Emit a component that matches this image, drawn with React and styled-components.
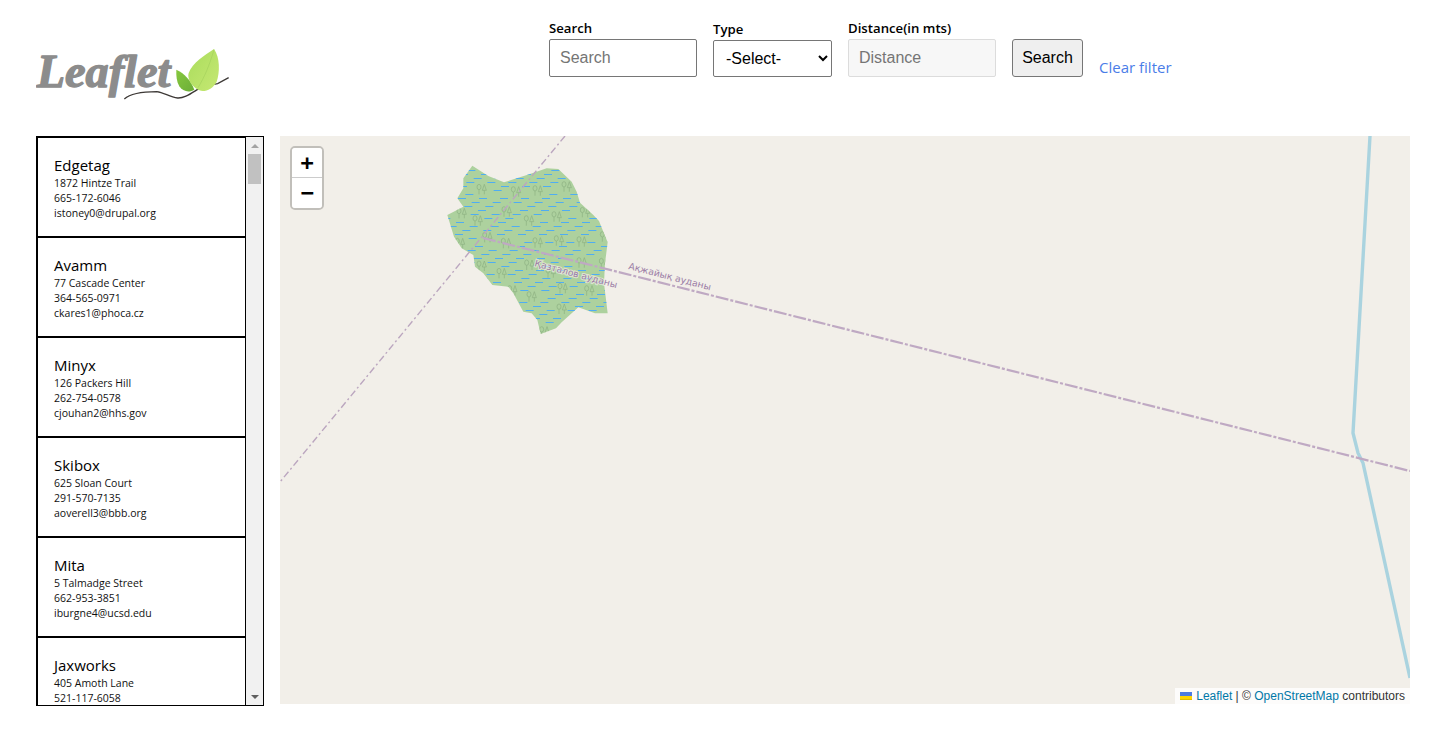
import React from "react";
import styled, { createGlobalStyle } from "styled-components";

const GlobalStyle = createGlobalStyle`
  body {
    margin: 0;
    background: #fff;
    font-family: "Open Sans", "Noto Sans", sans-serif;
    color: #000;
  }
`;

const Page = styled.div`
  width: 1441px;
  height: 730px;
  overflow: hidden;
`;

const Header = styled.header`
  height: 136px;
  box-sizing: border-box;
  padding-left: 36px;
  display: flex;
  align-items: flex-start;
`;

const LogoBox = styled.div`
  width: 513px;
  padding-top: 44px;
  flex-shrink: 0;

  svg {
    display: block;
  }
`;

const FilterForm = styled.form`
  display: flex;
  align-items: flex-end;
  gap: 16px;
  height: 77px;
`;

const Field = styled.label`
  display: flex;
  flex-direction: column;
  font-size: 13.2px;
  line-height: 18px;
  font-weight: 600;
  gap: 2px;
`;

const TextInput = styled.input`
  width: 148px;
  height: 38px;
  box-sizing: border-box;
  padding: 0 10px;
  border: 1px solid ${(p) => (p.disabled ? "#dcdcdc" : "#767676")};
  border-radius: 2px;
  background: ${(p) => (p.disabled ? "#f7f7f7" : "#fff")};
  font-family: "Liberation Sans", Arial, sans-serif;
  font-size: 16px;
  outline: none;

  &::placeholder {
    color: #757575;
    opacity: 1;
  }
`;

const TypeSelect = styled.select`
  width: 119px;
  height: 37px;
  box-sizing: border-box;
  padding: 0 8px;
  border: 1px solid #767676;
  border-radius: 2px;
  background: #fff;
  color: #000;
  font-family: "Liberation Sans", Arial, sans-serif;
  font-size: 16px;
`;

const SearchButton = styled.button`
  width: 71px;
  height: 38px;
  padding: 0;
  border: 1px solid #767676;
  border-radius: 3px;
  background: #efefef;
  color: #000;
  font-family: "Liberation Sans", Arial, sans-serif;
  font-size: 16px;
`;

const ClearLink = styled.a`
  font-size: 15px;
  line-height: 20px;
  color: #4a7de8;
  text-decoration: none;
`;

const Main = styled.main`
  display: flex;
  align-items: flex-start;
  gap: 16px;
  padding-left: 36px;
`;

const ListFrame = styled.div`
  width: 228px;
  height: 570px;
  box-sizing: border-box;
  border: 1px solid #000;
  display: flex;
`;

const CardList = styled.div`
  flex: 1;
  min-width: 0;
  overflow: hidden;
`;

// headless chrome hides real scrollbars, so the rail is drawn by hand
const ScrollRail = styled.div`
  width: 17px;
  flex-shrink: 0;
  background: #f1f1f1;
  display: flex;
  flex-direction: column;
  align-items: center;
`;

const RailArrow = styled.div`
  height: 17px;
  width: 100%;
  display: flex;
  align-items: center;
  justify-content: center;

  &::before {
    content: "";
    border-left: 4px solid transparent;
    border-right: 4px solid transparent;
    ${(p) => (p.$down ? "border-top: 4px solid #5f5f5f;" : "border-bottom: 4px solid #a3a3a3;")}
  }
`;

const RailThumb = styled.div`
  width: 13px;
  height: 30px;
  background: #c1c1c1;
`;

const RailGap = styled.div`
  flex: 1;
`;

const Card = styled.article`
  height: 100px;
  box-sizing: border-box;
  border: 1px solid #000;
  padding: 17px 16px 0;
  font-size: 10.5px;
  line-height: 15px;
  color: #111;
`;

const CardName = styled.h3`
  margin: 0;
  font-size: 15px;
  font-weight: 400;
  line-height: 21px;
  color: #000;
`;

const CardLine = styled.div`
  white-space: nowrap;
`;

const MapPanel = styled.section`
  position: relative;
  width: 1130px;
  height: 568px;
  background: #f2efe9;
  overflow: hidden;
`;

const MapCanvas = styled.svg`
  display: block;
`;

const ZoomBox = styled.div`
  position: absolute;
  top: 10px;
  left: 10px;
  border: 2px solid rgba(0, 0, 0, 0.2);
  border-radius: 5px;
  background-clip: padding-box;
  display: flex;
  flex-direction: column;
`;

const ZoomButton = styled.a`
  width: 30px;
  height: 30px;
  box-sizing: border-box;
  background: #fff;
  color: #000;
  font: bold 22px/30px "DejaVu Sans Mono", "Liberation Mono", monospace;
  text-align: center;
  border-bottom: ${(p) => (p.$first ? "1px solid #ccc" : "none")};
  border-radius: ${(p) => (p.$first ? "3px 3px 0 0" : "0 0 3px 3px")};
`;

const Attribution = styled.div`
  position: absolute;
  right: 0;
  bottom: 0;
  display: flex;
  align-items: center;
  height: 16px;
  padding: 0 5px;
  background: rgba(255, 255, 255, 0.8);
  color: #333;
  font: 12px/16px "Liberation Sans", Arial, sans-serif;
  white-space: pre;

  a {
    color: #0078a8;
    text-decoration: none;
  }
  svg {
    margin-right: 4px;
  }
`;

const vendors = [
  { name: "Edgetag", lines: ["1872 Hintze Trail", "665-172-6046", "istoney0@drupal.org"] },
  { name: "Avamm", lines: ["77 Cascade Center", "364-565-0971", "ckares1@phoca.cz"] },
  { name: "Minyx", lines: ["126 Packers Hill", "262-754-0578", "cjouhan2@hhs.gov"] },
  { name: "Skibox", lines: ["625 Sloan Court", "291-570-7135", "aoverell3@bbb.org"] },
  { name: "Mita", lines: ["5 Talmadge Street", "662-953-3851", "iburgne4@ucsd.edu"] },
  { name: "Jaxworks", lines: ["405 Amoth Lane", "521-117-6058"] },
];

const LeafletLogo = () => (
  <svg width="196" height="65" viewBox="0 -15 588 195">
    <defs>
      <linearGradient id="bigLeaf" x1="0" y1="0" x2="1" y2="1">
        <stop offset="0" stopColor="#a9dc5c" />
        <stop offset="1" stopColor="#c6e873" />
      </linearGradient>
      <linearGradient id="smallLeaf" x1="0" y1="0" x2="1" y2="1">
        <stop offset="0" stopColor="#86c83e" />
        <stop offset="1" stopColor="#6cae38" />
      </linearGradient>
    </defs>
    <text
      x="2"
      y="114"
      fontFamily="'Liberation Serif', serif"
      fontStyle="italic"
      fontWeight="700"
      fontSize="139"
      fill="#8c8c8c"
      stroke="#8c8c8c"
      strokeWidth="4"
      strokeLinejoin="round"
    >
      Leaflet
    </text>
    <path
      d="M265 150 C285 132 325 128 362 128 C385 130 400 145 425 147 C445 148 462 135 490 118 L520 108 L545 104 L578 86"
      fill="none"
      stroke="#3d3936"
      strokeWidth="4"
    />
    <path d="M421 62 C445 72 465 95 475 122 C460 132 440 128 430 112 C422 98 420 80 421 62Z" fill="url(#smallLeaf)" />
    <path d="M534 0 C552 25 552 70 542 98 C530 122 505 130 490 124 C470 116 452 90 458 72 C470 40 505 20 534 0Z" fill="url(#bigLeaf)" />
    <path d="M534 2 C520 50 505 85 486 116" fill="none" stroke="#9ccb58" strokeWidth="1.5" />
  </svg>
);

const wetlandShape =
  "127,47 175,78 222,97 300,72 350,55 385,57 425,95 440,125 450,158 490,195 507,213 520,245 533,277 525,340 522,400 527,440 533,490 495,490 445,472 395,517 378,535 332,552 322,510 305,490 280,485 250,430 235,410 187,405 160,370 135,350 130,315 95,295 72,260 52,195 100,170 82,145 100,115 100,85";

const treeSpots = [
  [155, 118], [258, 125], [323, 122], [410, 110], [95, 190], [143, 212], [230, 185], [297, 212],
  [380, 200], [465, 187], [172, 262], [228, 280], [323, 278], [387, 272], [455, 275], [155, 348],
  [215, 370], [298, 345], [362, 368], [455, 338], [247, 422], [305, 440], [398, 415], [478, 422],
  [395, 477], [343, 545], [90, 280], [522, 340], [525, 260],
];

const nearTree = (x, y) =>
  treeSpots.some(([tx, ty]) => x + 24 > tx - 16 && x < tx + 16 && Math.abs(y - ty) < 17);

// water dashes of the marsh, staggered rows that leave the trees free
const marshDashes = Array.from({ length: 44 }, (_, r) =>
  Array.from({ length: 9 }, (_, c) => ({
    x: 30 + c * 63 + ((r * 41) % 63),
    y: 12 * r + 37.5,
  }))
)
  .flat()
  .filter((d) => !nearTree(d.x, d.y));

const MapDrawing = () => (
  <MapCanvas width="1130" height="568" viewBox="0 0 1130 568">
    <defs>
      <clipPath id="wetlandClip">
        <polygon points={wetlandShape} />
      </clipPath>
    </defs>

    <polyline
      points="1090,0 1073,297 1078,317 1083,327 1130,542"
      fill="none"
      stroke="#aad3df"
      strokeWidth="3.4"
    />

    <g transform={`translate(150 14) scale(${1 / 3})`}>
      <polygon points={wetlandShape} fill="#add19e" />
      <g clipPath="url(#wetlandClip)">
        <g stroke="#4fadf2" strokeWidth="3">
          {marshDashes.map((d) => (
            <line key={`${d.x}-${d.y}`} x1={d.x} x2={d.x + 24} y1={d.y} y2={d.y} />
          ))}
        </g>
        <g fill="none" stroke="#8fb283" strokeWidth="2.2">
          {treeSpots.map(([x, y]) => (
            <g key={`${x}-${y}`} transform={`translate(${x} ${y})`}>
              <ellipse cx="-8" cy="-7" rx="6" ry="8" />
              <line x1="-8" y1="1" x2="-8" y2="15" />
              <path d="M8 -15 L14 3 L2 3Z" />
              <line x1="8" y1="3" x2="8" y2="15" />
            </g>
          ))}
        </g>
      </g>
    </g>

    <line x1="285" y1="0" x2="0" y2="346" stroke="#bba6bf" strokeWidth="1.4" strokeDasharray="7 3 2 3" />
    <line x1="203" y1="102" x2="1130" y2="335" stroke="#bfa9c3" strokeWidth="2.2" strokeDasharray="13 2 3 2" />

    <g
      fontFamily="'DejaVu Sans', sans-serif"
      fontSize="9.3"
      fill="#9c7ea6"
      stroke="#f2efe9"
      strokeWidth="2"
      paintOrder="stroke"
      strokeOpacity="0.7"
    >
      <text transform="translate(254 130) rotate(15)">Қазталов ауданы</text>
      <text transform="translate(348 133) rotate(14.5)">Ақжайық ауданы</text>
    </g>
  </MapCanvas>
);

export default function App() {
  return (
    <Page>
      <GlobalStyle />
      <Header>
        <LogoBox>
          <LeafletLogo />
        </LogoBox>
        <FilterForm onSubmit={(e) => e.preventDefault()}>
          <Field>
            Search
            <TextInput placeholder="Search" />
          </Field>
          <Field>
            Type
            <TypeSelect defaultValue="">
              <option value="">-Select-</option>
            </TypeSelect>
          </Field>
          <Field>
            Distance(in mts)
            <TextInput placeholder="Distance" disabled />
          </Field>
          <SearchButton type="submit">Search</SearchButton>
          <ClearLink href="#">Clear filter</ClearLink>
        </FilterForm>
      </Header>
      <Main>
        <ListFrame>
          <CardList>
            {vendors.map((v) => (
              <Card key={v.name}>
                <CardName>{v.name}</CardName>
                {v.lines.map((line) => (
                  <CardLine key={line}>{line}</CardLine>
                ))}
              </Card>
            ))}
          </CardList>
          <ScrollRail>
            <RailArrow />
            <RailThumb />
            <RailGap />
            <RailArrow $down />
          </ScrollRail>
        </ListFrame>
        <MapPanel>
          <MapDrawing />
          <ZoomBox>
            <ZoomButton $first>+</ZoomButton>
            <ZoomButton>−</ZoomButton>
          </ZoomBox>
          <Attribution>
            <svg width="12" height="8" viewBox="0 0 12 8">
              <path fill="#4c7be1" d="M0 0h12v4H0z" />
              <path fill="#ffd500" d="M0 4h12v3H0z" />
              <path fill="#e0bc00" d="M0 7h12v1H0z" />
            </svg>
            <a href="#">Leaflet</a> | © <a href="#">OpenStreetMap</a> contributors
          </Attribution>
        </MapPanel>
      </Main>
    </Page>
  );
}
